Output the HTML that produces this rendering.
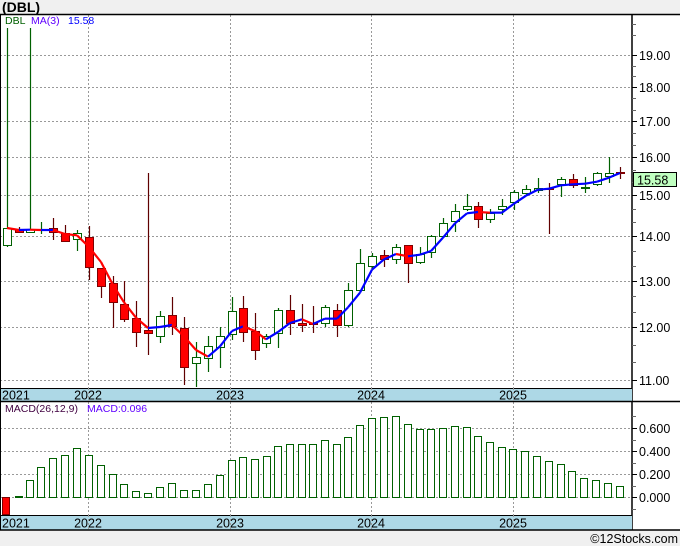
<!DOCTYPE html>
<html><head><meta charset="utf-8"><style>
html,body{margin:0;padding:0;background:#f0f0f0;}
svg{display:block;}
text{font-family:"Liberation Sans","DejaVu Sans",sans-serif;}
</style></head><body>
<svg id="s" width="680" height="546" xmlns="http://www.w3.org/2000/svg">
<rect x="0" y="0" width="680" height="546" fill="#f0f0f0"/>
<rect x="0" y="14" width="680" height="516" fill="#fff"/>
<text x="2" y="12" font-size="14" font-weight="bold" fill="#000">(DBL)</text>
<g id="g"></g>
</svg>
<script>
var g=document.getElementById('g');var h='';
function L(x1,y1,x2,y2,c,w,d){h+='<line x1="'+x1+'" y1="'+y1+'" x2="'+x2+'" y2="'+y2+'" stroke="'+c+'" stroke-width="'+(w||1)+'"'+(d?' stroke-dasharray="'+d+'"':'')+'/>';}
function R(x,y,w,hh,f,s){h+='<rect x="'+x+'" y="'+y+'" width="'+w+'" height="'+hh+'" fill="'+f+'"'+(s?' stroke="'+s+'" stroke-width="1"':'')+'/>';}
function T(x,y,t,c,sz,a){h+='<text x="'+x+'" y="'+y+'" font-size="'+(sz||11)+'" fill="'+(c||'#000')+'"'+(a?' text-anchor="'+a+'"':'')+'>'+t+'</text>';}
var pl=[[19,55],[18,87],[17,121],[16,157],[15,195],[14,236],[13,281],[12,327],[11,380]];
pl.forEach(function(p){L(0,p[1]+.5,632,p[1]+.5,'#999',1,'2,2');});
[88,230,371,513].forEach(function(x){L(x+.5,15,x+.5,388,'#999',1,'2,2');L(x+.5,402,x+.5,515,'#999',1,'2,2');});
[[428,'0.600'],[451,'0.400'],[474,'0.200'],[497,'0.000']].forEach(function(p){L(0,p[0]+.5,632,p[0]+.5,'#999',1,'2,2');});
var C=[[7,228,245,28,247,'g'],[19,229,232,227,233,'r'],[30,229,232,28,233,'g'],[41,229,230,222,234,'g'],[53,228,232,218,240,'r'],[65,233,241,225,242,'r'],[77,233,239,230,251,'g'],[89,237,267,226,280,'r'],[101,268,286,268,298,'r'],[113,283,302,276,328,'r'],[124,304,319,281,322,'r'],[136,318,332,301,347,'r'],[148,330,333,173,355,'r'],[160,316,336,311,343,'g'],[172,315,326,297,335,'r'],[184,328,367,317,385,'r'],[196,357,363,342,387,'g'],[208,346,358,336,372,'g'],[220,336,347,327,368,'g'],[232,311,334,297,340,'g'],[243,308,332,296,342,'r'],[255,331,350,313,360,'r'],[266,336,343,334,348,'g'],[278,310,333,308,348,'g'],[290,310,323,295,335,'r'],[302,323,325,304,332,'r'],[313,323,324,306,333,'r'],[325,307,323,305,327,'g'],[337,310,325,304,337,'r'],[348,290,325,283,327,'g'],[360,263,290,249,291,'g'],[372,256,266,253,269,'g'],[384,255,259,250,267,'r'],[396,247,259,244,264,'g'],[408,245,263,245,283,'r'],[420,254,262,247,264,'g'],[431,236,252,235,258,'g'],[443,223,236,218,236,'g'],[455,211,221,204,232,'g'],[467,206,209,194,211,'g'],[478,206,219,202,228,'r'],[490,213,219,209,223,'g'],[502,206,209,199,215,'g'],[514,192,202,190,210,'g'],[526,189,193,185,195,'g'],[538,188,190,178,193,'g'],[549,188,189,183,234,'r'],[561,179,184,177,197,'g'],[573,179,185,174,188,'r'],[585,187,188,177,193,'g'],[597,173,184,172,186,'g'],[609,173,176,157,183,'g'],[620,172,173,167,179,'r']];
C.forEach(function(c){var x=c[0],gr=c[5]=='g';var wc=gr?'#006000':'#600000';
L(x+.5,c[3],x+.5,c[4],wc,1.2);
var bh=Math.max(1,c[2]-c[1]);
if(gr)R(x-3.5,c[1]+.5,8,bh,'#fff','#006000');else R(x-3.5,c[1]+.5,8,bh,'#f00','#800000');});
var cl=C.map(function(c){return c[5]=='g'?c[1]:c[2];});
var ma=[];for(var i=0;i<cl.length;i++){var a=cl.slice(Math.max(0,i-2),i+1);ma.push(a.reduce(function(s,v){return s+v;},0)/a.length);}
for(var i=1;i<ma.length;i++){var col=ma[i]<=ma[i-1]?'#0000ff':'#ff0000';L(C[i-1][0],ma[i-1],C[i][0],ma[i],col,2.2);}
L(632,14,632,530,'#000',1.5);
pl.forEach(function(p){L(632,p[1]+.5,637,p[1]+.5,'#000');T(639,p[1]+5,p[0].toFixed(2),'#000',12.5);});
for(var k=0;k<pl.length-1;k++){var a=pl[k][1],b=pl[k+1][1];for(var j=1;j<3;j++){var y=Math.round(a+(b-a)*j/3)+.5;L(632,y,636,y,'#666');}}
L(632,24.5,636,24.5,'#666');L(632,35.5,636,35.5,'#666');
R(633.5,172.5,43,14,'#c0ffc0','#000');T(637,184.5,'15.58','#000',12.5);
var M=[[19,496],[30,480],[41,467],[53,458],[65,455],[77,448],[89,455],[101,465],[113,474],[124,484],[136,491],[148,493],[160,487],[172,483],[184,490],[196,490],[208,484],[220,475],[232,460],[243,457],[255,459],[267,456],[278,446],[290,444],[302,444],[313,444],[325,440],[337,444],[348,437],[360,425],[372,418],[384,417],[396,416],[408,424],[420,429],[431,429],[443,428],[455,426],[467,427],[478,436],[490,442],[502,447],[513,449],[525,451],[537,456],[549,461],[561,464],[572,471],[584,478],[596,480],[608,483],[620,486]];
M.forEach(function(m){R(m[0]-3.5,m[1]+.5,7,Math.max(1,497-m[1]),'#fff','#006000');});
R(2.5,497.5,7,17,'#f00','#800000');
[[428,'0.600'],[451,'0.400'],[474,'0.200'],[497,'0.000']].forEach(function(p){L(632,p[0]+.5,637,p[0]+.5,'#000');T(639,p[0]+5,p[1],'#000',12.5);});
[416,440,463,486,509].forEach(function(y){L(632,y+.5,636,y+.5,'#666');});
R(0,388.5,632,13,'#add8e6');L(0,388.5,632,388.5,'#000');
R(0,515.5,632,14,'#add8e6');L(0,515.5,632,515.5,'#000');
L(0,401.5,680,401.5,'#000',1.5);L(0,14.5,680,14.5,'#000',1.5);L(0,530,680,530,'#000',1.5);
L(0.5,14,0.5,530,'#000',1);
[[2,'2021','start'],[88,'2022','middle'],[230,'2023','middle'],[371,'2024','middle'],[513,'2025','middle']].forEach(function(p){T(p[0],399.5,p[1],'#000',12.5,p[2]);T(p[0],527.5,p[1],'#000',12.5,p[2]);});
[88,230,371,513].forEach(function(x){L(x+.5,388,x+.5,401,'#999',1,'2,2');L(x+.5,515,x+.5,530,'#999',1,'2,2');});
T(5,24,'DBL','#006000',10.5);T(31,24,'MA(3)','#6000ff',10.5);T(68,24,'15.58','#0000ff',10.5);
T(5,412,'MACD(26,12,9)','#400040',10.5);T(87,412,'MACD:0.096','#6000ff',10.5);
T(678,543,'©12Stocks.com','#000',12.5,'end');
g.innerHTML=h;
</script>
</body></html>
